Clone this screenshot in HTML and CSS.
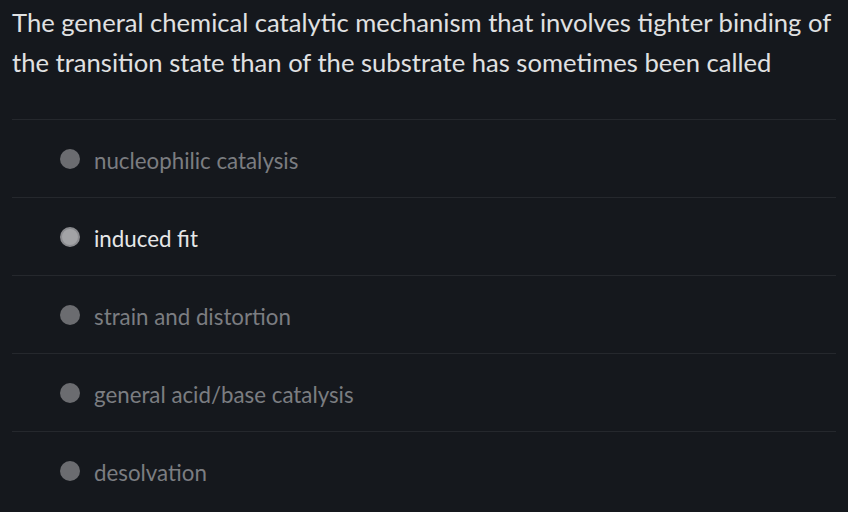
FILE: index.html
```html
<!DOCTYPE html>
<html>
<head>
<meta charset="utf-8">
<link rel="stylesheet" href="styles.css">
</head>
<body>
<div class="page">
  <div class="question">The general chemical catalytic mechanism that involves tighter binding of the transition state than of the substrate has sometimes been called</div>
  <div class="options">
    <div class="option"><span class="radio"></span><span class="label">nucleophilic catalysis</span></div>
    <div class="option selected"><span class="radio"></span><span class="label">induced fit</span></div>
    <div class="option"><span class="radio"></span><span class="label">strain and distortion</span></div>
    <div class="option"><span class="radio"></span><span class="label">general acid/base catalysis</span></div>
    <div class="option"><span class="radio"></span><span class="label">desolvation</span></div>
  </div>
</div>
</body>
</html>
```
FILE: styles.css
```css
html, body {
  margin: 0;
  padding: 0;
  background: #15181d;
  height: 100%;
  overflow: hidden;
}
.page {
  padding: 2px 12px 0 12px;
  font-family: Lato, "Open Sans", sans-serif;
}
.question {
  font-size: 25.6px;
  line-height: 40px;
  color: #e0e1e2;
  padding-bottom: 37px;
}
.options {
  display: flex;
  flex-direction: column;
}
.option {
  height: 77px;
  border-top: 1px solid #25282d;
  display: flex;
  align-items: center;
  padding-left: 48px;
  gap: 14px;
}
.radio {
  width: 20px;
  height: 20px;
  border-radius: 50%;
  background: #6b6c70;
  box-sizing: border-box;
  flex: none;
}
.selected .radio {
  background: #a2a3a6;
  border: 2px solid #8a8b8f;
}
.label {
  font-size: 22.3px;
  color: #7b7d81;
  padding-top: 4px;
}
.selected .label {
  color: #e6e7e8;
}
```
